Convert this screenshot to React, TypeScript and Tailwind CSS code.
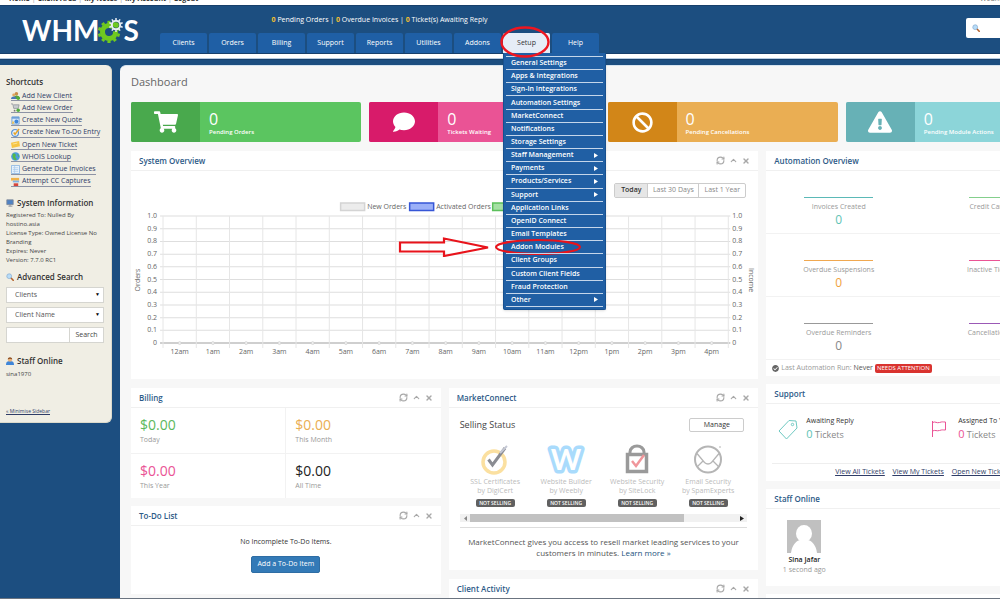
// WHMCS admin dashboard with the Setup menu open.

import type { ReactNode } from 'react';
import { FaBan, FaCheckCircle, FaComment, FaExclamationTriangle, FaShoppingCart } from 'react-icons/fa';
import { ChevronUp, RefreshCw, X } from 'lucide-react';
import clsx from 'clsx';

const topLinks = ['Home', 'Client Area', 'My Notes', 'My Account', 'Logout'];

const navItems = ['Clients', 'Orders', 'Billing', 'Support', 'Reports', 'Utilities', 'Addons', 'Setup', 'Help'];

const setupMenu = [
  { label: 'General Settings' },
  { label: 'Apps & Integrations' },
  { label: 'Sign-In Integrations' },
  { label: 'Automation Settings' },
  { label: 'MarketConnect' },
  { label: 'Notifications' },
  { label: 'Storage Settings' },
  { label: 'Staff Management', sub: true },
  { label: 'Payments', sub: true },
  { label: 'Products/Services', sub: true },
  { label: 'Support', sub: true },
  { label: 'Application Links' },
  { label: 'OpenID Connect' },
  { label: 'Email Templates' },
  { label: 'Addon Modules' },
  { label: 'Client Groups' },
  { label: 'Custom Client Fields' },
  { label: 'Fraud Protection' },
  { label: 'Other', sub: true },
];

const stats = [
  { label: 'Pending Orders', icon: <FaShoppingCart size={24} />, dark: 'bg-[#49a94d]', light: 'bg-[#5bc560]' },
  { label: 'Tickets Waiting', icon: <FaComment size={22} />, dark: 'bg-[#d81b6a]', light: 'bg-[#ea5395]' },
  { label: 'Pending Cancellations', icon: <FaBan size={21} />, dark: 'bg-[#d28618]', light: 'bg-[#eaae53]' },
  { label: 'Pending Module Actions', icon: <FaExclamationTriangle size={24} />, dark: 'bg-[#67b1b6]', light: 'bg-[#8cd5d9]' },
];

const billing = [
  { label: 'Today', color: 'text-[#5cb85c]' },
  { label: 'This Month', color: 'text-[#eaae53]' },
  { label: 'This Year', color: 'text-[#ea5395]' },
  { label: 'All Time', color: 'text-[#222222]' },
];

const automation = [
  { label: 'Invoices Created', line: 'bg-[#5bb9b7]', color: 'text-[#5ec3b5]' },
  { label: 'Credit Card Captures', line: 'bg-[#84cf8c]', color: 'text-[#8fb021]' },
  { label: 'Overdue Suspensions', line: 'bg-[#f0a850]', color: 'text-[#f0a23c]' },
  { label: 'Inactive Tickets Closed', line: 'bg-[#ea5395]', color: 'text-[#e0457f]' },
  { label: 'Overdue Reminders', line: 'bg-[#999999]', color: 'text-[#888888]' },
  { label: 'Cancellation Requests', line: 'bg-[#9b59b6]', color: 'text-[#b446b8]' },
];

const hours = [
  '12am', '1am', '2am', '3am', '4am', '5am', '6am', '7am', '8am',
  '9am', '10am', '11am', '12pm', '1pm', '2pm', '3pm', '4pm',
];

/* ---------- small drawings ---------- */

function Gears() {
  const teeth = [0, 36, 72, 108, 144, 180, 216, 252, 288, 324];
  return (
    <svg viewBox="0 0 26 26" className="-mx-px h-[26px] w-[26px]" aria-hidden="true">
      <g stroke="#6fc91f" fill="none">
        <circle cx="11" cy="15" r="6.500" strokeWidth="5" strokeDasharray="35 6" transform="rotate(-8 11 15)" />
        {teeth.map((a) => (
          <path key={a} d="M11 6.500V3.800" strokeWidth="3.200" transform={`rotate(${a} 11 15)`} />
        ))}
      </g>
      <g stroke="#e9eef3" fill="none">
        <circle cx="18" cy="8" r="4.200" strokeWidth="2" />
        {teeth.map((a) => (
          <path key={a} d="M18 3.200V1" strokeWidth="1.500" transform={`rotate(${a} 18 8)`} />
        ))}
      </g>
      <circle cx="18" cy="8" r="2.800" fill="#6fc91f" />
    </svg>
  );
}

function Magnifier() {
  return (
    <svg viewBox="0 0 10 10" className="h-2 w-2 shrink-0" aria-hidden="true">
      <path d="M6 6l3 3" stroke="#b5622c" strokeWidth="2" strokeLinecap="round" />
      <circle cx="4" cy="4" r="3" fill="#b7dcf8" stroke="#8fb3d4" />
    </svg>
  );
}

function Monitor() {
  return (
    <svg viewBox="0 0 10 10" className="h-2 w-2 shrink-0" aria-hidden="true">
      <path d="M1 1h8v6H1z" fill="#4f82c4" stroke="#7d8796" />
      <path d="M3 9h5M5 7v2" stroke="#7d8796" />
    </svg>
  );
}

function Person() {
  return (
    <svg viewBox="0 0 10 10" className="h-2 w-2 shrink-0" aria-hidden="true">
      <path d="M0 10c0-4 2-5 5-5s5 1 5 5z" fill="#3f86d8" />
      <circle cx="5" cy="3.400" r="2.600" fill="#e8b27c" />
      <path d="M2.200 3.200C2.200 1 4 .2 5 .2S7.800 1 7.800 3.200C6 2 4 2 2.200 3.200z" fill="#8a4b1e" />
    </svg>
  );
}

const shortcuts: { label: string; art: ReactNode }[] = [
  {
    label: 'Add New Client',
    art: (
      <>
        <circle cx="6" cy="3" r="2" fill="#c98d4a" />
        <path d="M3 9c0-3 1-4 3-4s4 1 4 4z" fill="#5b9e3e" />
        <circle cx="3" cy="4.500" r="1.600" fill="#e0a860" />
        <path d="M0 9c0-2 1-3 3-3s3 1 3 3z" fill="#4878b8" />
        <circle cx="8" cy="8" r="2" fill="#4fae3c" />
      </>
    ),
  },
  {
    label: 'Add New Order',
    art: (
      <>
        <path d="M0 1h2l1 5h5l1-4H3" fill="#c9ccd0" stroke="#8c9095" strokeWidth=".8" />
        <circle cx="4" cy="8.500" r="1" fill="#777" />
        <circle cx="8" cy="8" r="2" fill="#4fae3c" />
      </>
    ),
  },
  {
    label: 'Create New Quote',
    art: (
      <>
        <path d="M1 1h8v8H1z" fill="#dbeafa" stroke="#6d9fd8" />
        <path d="M1 1h8v2H1z" fill="#6d9fd8" />
        <circle cx="6" cy="6" r="2.200" fill="#3f86d8" />
        <path d="M1 9l1-4 2 3z" fill="#f0c14a" />
      </>
    ),
  },
  {
    label: 'Create New To-Do Entry',
    art: (
      <>
        <circle cx="4.500" cy="5.500" r="3.800" fill="#e4effb" stroke="#5b93d6" strokeWidth="1.300" />
        <path d="M3 5l1.500 2L9 1" stroke="#e9a425" strokeWidth="1.600" fill="none" />
      </>
    ),
  },
  {
    label: 'Open New Ticket',
    art: (
      <>
        <path d="M0 3l9-2 1 6-9 2z" fill="#f6c544" />
        <path d="M2 4.500l5-1" stroke="#fbe49a" />
      </>
    ),
  },
  {
    label: 'WHOIS Lookup',
    art: (
      <>
        <circle cx="5" cy="5" r="4.800" fill="#4b9be0" />
        <path d="M2 2c3-1 4 1 3 3s2 1 1 4C3 9 1 7 2 2z" fill="#54b848" />
        <path d="M7 2c2 1 2 3 1 4z" fill="#54b848" />
      </>
    ),
  },
  {
    label: 'Generate Due Invoices',
    art: (
      <>
        <path d="M.5.5h9v9h-9z" fill="#e8f2fc" stroke="#90b8e2" />
        <path d="M2 3h6M2 5h6M2 7h6M4 1v8" stroke="#a9c8ea" strokeWidth=".8" />
      </>
    ),
  },
  {
    label: 'Attempt CC Captures',
    art: (
      <>
        <path d="M0 1h9v3H0z" fill="#f1b24a" />
        <path d="M2 4h7v2H2z" fill="#7fb2e5" />
        <path d="M3 7h5v3H3z" fill="#d5453c" />
      </>
    ),
  },
];

/* ---------- shared pieces ---------- */

function Panel({
  title,
  tools = false,
  className,
  children,
}: {
  title: string;
  tools?: boolean;
  className?: string;
  children?: ReactNode;
}) {
  return (
    <section className={clsx('flex flex-col bg-white', className)}>
      <header className="flex h-5 shrink-0 items-center justify-between border-b border-[#f0f0f0] px-2">
        <h2 className="text-[8px] font-semibold text-[#2d5a87]">{title}</h2>
        {tools && (
          <div className="flex items-center gap-1 text-[#a8a8a8]">
            <button type="button" aria-label="Refresh"><RefreshCw size={9} strokeWidth={3} /></button>
            <button type="button" aria-label="Collapse"><ChevronUp size={9} strokeWidth={3} /></button>
            <button type="button" aria-label="Close"><X size={8} strokeWidth={4} /></button>
          </div>
        )}
      </header>
      {children}
    </section>
  );
}

function SideHeading({ icon, children }: { icon?: ReactNode; children: ReactNode }) {
  return (
    <h3 className="flex items-center gap-[3px] text-[8px] leading-3 font-semibold text-[#333]">
      {icon}
      {children}
    </h3>
  );
}

function SideSelect({ label, value }: { label: string; value: string }) {
  return (
    <div className="relative mt-1">
      <select
        aria-label={label}
        className="block h-4 w-full appearance-none border border-[#d5d5d0] bg-white pl-2 text-[7px] text-[#555]"
      >
        <option>{value}</option>
      </select>
      <span className="pointer-events-none absolute top-1 right-1 text-[5px] leading-[7px] text-black">▼</span>
    </div>
  );
}

/* ---------- page areas ---------- */

function SetupMenu() {
  return (
    <div className="absolute top-5 left-0 z-20 w-[103px] rounded-b-xs border border-t-0 border-[#17508f] bg-[#205fa4] px-[2px] pt-[3px] pb-[2px] shadow">
      <ul className="grid h-[251px] auto-rows-fr border-b border-[#c4d6ea]">
        {setupMenu.map(({ label, sub }) => (
          <li key={label} className="relative flex items-center border-t border-[#c4d6ea]">
            <a href="#" className="flex flex-1 items-center justify-between pr-[5px] pl-[5px] text-[7px] leading-[10px] font-semibold whitespace-nowrap text-white">
              {label}
              {sub && (
                <svg viewBox="0 0 4 5" className="h-[5px] w-1" aria-hidden="true">
                  <path d="M0 0l4 2.500L0 5z" fill="#fff" />
                </svg>
              )}
            </a>
            {label === 'Addon Modules' && (
              <svg viewBox="0 0 184 20" className="pointer-events-none absolute top-[-4px] right-[21px] h-5 w-[184px]" fill="none" stroke="#e8131b" strokeWidth="2.200">
                <path d="M2 5.500H46V1.500L90 10.500 46 19V14.500H2z" />
                <ellipse cx="140" cy="10" rx="42" ry="7" />
              </svg>
            )}
          </li>
        ))}
      </ul>
    </div>
  );
}

function Header() {
  return (
    <header>
      <div className="flex h-[5px] items-end overflow-hidden bg-white text-[7px] leading-3 font-bold text-[#333]">
        <nav className="flex pl-[9px]">
          {topLinks.map((text, i) => (
            <span key={text} className="flex">
              {i > 0 && <span className="px-[2px] font-normal text-[#999]">|</span>}
              <a href="#">{text}</a>
            </span>
          ))}
        </nav>
        <span className="ml-auto w-[105px] font-normal text-[#777]">Wednesday</span>
      </div>

      <div className="flex h-[49px] border-y border-[#173f6b] bg-[#1c4e80]">
        <a href="#" aria-label="WHMCS" className="flex w-[160px] items-center pl-[22px] font-[Lato,sans-serif] text-[28px] leading-8 font-bold text-white">
          WHM
          <Gears />
          S
        </a>

        <div className="flex flex-col items-center justify-between">
          <p className="pt-[9px] text-[7px] leading-[10px] text-white">
            <a href="#"><b className="text-[#f7c12d]">0</b> Pending Orders</a> |{' '}
            <a href="#"><b className="text-[#f7c12d]">0</b> Overdue Invoices</a> |{' '}
            <a href="#"><b className="text-[#f7c12d]">0</b> Ticket(s) Awaiting Reply</a>
          </p>
          <nav>
            <ul className="flex gap-[2px]">
              {navItems.map((item) => (
                <li key={item} className="relative">
                  <a
                    href="#"
                    className={clsx(
                      'flex h-5 w-[47px] items-center justify-center rounded-t-xs text-[7px] font-medium',
                      item === 'Setup' ? 'bg-[#e6edf7] text-[#333]' : 'bg-[#1f5fa5] text-white'
                    )}
                  >
                    {item}
                  </a>
                  {item === 'Setup' && (
                    <>
                      <SetupMenu />
                      <svg viewBox="0 0 52 32" className="pointer-events-none absolute -top-[7px] -left-[3px] z-30 h-8 w-[52px]" fill="none" stroke="#ee1620" strokeWidth="2.400">
                        <ellipse cx="25" cy="16" rx="23.500" ry="14.500" />
                      </svg>
                    </>
                  )}
                </li>
              ))}
            </ul>
          </nav>
        </div>

        <label className="mt-3 mr-[9px] ml-auto flex h-5 w-[110px] items-center rounded-xs bg-white pl-[6px]">
          <Magnifier />
          <input type="text" aria-label="Search" className="w-20 text-[8px] outline-none" />
        </label>
      </div>
      <div className="h-[5px] border-b border-[#b5cbe2] bg-white" />
    </header>
  );
}

function Sidebar() {
  return (
    <aside className="h-[358px] w-28 shrink-0 rounded-r-md border-r border-b border-[#dcdacb] bg-[#f0eee4] px-[6px] pt-[11px] text-[#444]">
      <SideHeading>Shortcuts</SideHeading>
      <ul className="mt-[2px] grid h-[98px] auto-rows-fr pl-[5px]">
        {shortcuts.map(({ label, art }) => (
          <li key={label} className="flex items-center">
            <a href="#" className="flex items-center gap-[2px] border-b border-[#8d93a5] text-[7px] leading-[8px] whitespace-nowrap text-[#2f3c66]">
              <svg viewBox="0 0 10 10" className="h-[9px] w-[9px] shrink-0" aria-hidden="true">{art}</svg>
              {label}
            </a>
          </li>
        ))}
      </ul>

      <div className="mt-[9px]">
        <SideHeading icon={<Monitor />}>System Information</SideHeading>
        <p className="mt-[2px] text-[6px] leading-[9px]">
          Registered To: Nulled By<br />
          hostino.asia<br />
          License Type: Owned License No<br />
          Branding<br />
          Expires: Never<br />
          Version: 7.7.0 RC1
        </p>
      </div>

      <div className="mt-[6px]">
        <SideHeading icon={<Magnifier />}>Advanced Search</SideHeading>
        <div className="pr-px">
          <SideSelect label="Search type" value="Clients" />
          <SideSelect label="Search field" value="Client Name" />
          <div className="mt-1 flex h-4">
            <input aria-label="Search text" type="text" className="w-0 flex-1 border border-[#d5d5d0] bg-white text-[7px]" />
            <button type="button" className="w-[34px] border border-l-0 border-[#d5d5d0] bg-white text-[7px]">Search</button>
          </div>
        </div>
      </div>

      <div className="mt-3">
        <SideHeading icon={<Person />}>Staff Online</SideHeading>
        <p className="mt-[3px] text-[6px] leading-[9px]">sina1970</p>
      </div>
      <a href="#" className="mt-7 block text-[5px] leading-[9px] text-[#2f3c66] underline">« Minimise Sidebar</a>
    </aside>
  );
}

function OverviewChart() {
  const left = 32;
  const right = 597;
  const top = 16;
  const bottom = 143;
  const col = (right - left) / hours.length;
  const row = (bottom - top) / 10;
  const ticks = ['1.0', '0.9', '0.8', '0.7', '0.6', '0.5', '0.4', '0.3', '0.2', '0.1', '0'];
  return (
    <svg viewBox="0 0 627 165" className="block w-full" fill="#666" fontSize="7" role="img" aria-label="Orders and income today">
      <g strokeWidth="1.500">
        <path d="M209.500 3h24v7.500h-24z" fill="#ececec" stroke="#d4d4d4" />
        <path d="M278.500 3h24v7.500h-24z" fill="#9bb0f8" stroke="#3656d6" />
        <path d="M361.500 3h24v7.500h-24z" fill="#a5e0a5" stroke="#5bc05b" />
      </g>
      <text x="236" y="9">New Orders</text>
      <text x="305" y="9">Activated Orders</text>

      {ticks.map((t, i) => (
        <g key={t}>
          <path d={`M${left - 3} ${top + i * row}H${right + 2}`} stroke={i === 10 ? '#a0a0a0' : '#dedede'} />
          <text x={left - 6} y={top + i * row + 2} textAnchor="end">{t}</text>
          <text x={right + 4} y={top + i * row + 2}>{t}</text>
        </g>
      ))}
      {[...hours, ''].map((h, i) => (
        <g key={h}>
          <path d={`M${left + i * col} ${top}V${bottom + 5}`} stroke="#e6e6e6" />
          {h && (
            <>
              <circle cx={left + (i + 0.5) * col} cy={bottom} r="1.500" fill="#eeeeee" stroke="#c4c4c4" strokeWidth=".5" />
              <text x={left + (i + 0.5) * col} y={bottom + 11} textAnchor="middle">{h}</text>
            </>
          )}
        </g>
      ))}
      <text transform="translate(8.500 80) rotate(-90)" textAnchor="middle">Orders</text>
      <text transform="translate(618 80) rotate(90)" textAnchor="middle">Income</text>
    </svg>
  );
}

function SystemOverview() {
  return (
    <Panel title="System Overview" tools className="h-[228px]">
      <div className="mt-3 mr-3 flex h-[15px] self-end rounded-xs border border-[#ccc] text-[7px] text-[#888]">
        <button type="button" className="w-8 bg-[#e6e6e6] font-semibold text-[#333]">Today</button>
        <button type="button" className="w-[52px] border-x border-[#ccc]">Last 30 Days</button>
        <button type="button" className="w-[46px]">Last 1 Year</button>
      </div>
      <div className="mt-[2px]">
        <OverviewChart />
      </div>
    </Panel>
  );
}

function Billing() {
  return (
    <Panel title="Billing" tools className="h-[110px]">
      <div className="grid flex-1 grid-cols-2 grid-rows-2 gap-px bg-[#f2f2f2]">
        {billing.map(({ label, color }) => (
          <div key={label} className="bg-white pt-[9px] pl-[9px]">
            <p className={clsx('text-[14px] leading-4', color)}>$0.00</p>
            <p className="mt-[2px] text-[7px] leading-[10px] text-[#999]">{label}</p>
          </div>
        ))}
      </div>
    </Panel>
  );
}

function TodoList() {
  return (
    <Panel title="To-Do List" tools className="h-[88px] items-stretch">
      <div className="flex flex-col items-center pt-[11px]">
        <p className="text-[7px] leading-[10px] text-[#333]">No Incomplete To-Do Items.</p>
        <button type="button" className="mt-[9px] h-[17px] w-[69px] rounded-xs border border-[#2e6da4] bg-[#337ab7] text-[7px] font-medium text-white">
          Add a To-Do Item
        </button>
      </div>
    </Panel>
  );
}

const products = [
  {
    name: 'SSL Certificates',
    vendor: 'by DigiCert',
    art: (
      <>
        <circle cx="17" cy="18" r="11" fill="none" stroke="#fbe0a0" strokeWidth="3.500" />
        <path d="M11.500 15.500l4 5.500L28 4" fill="none" stroke="#8a8c92" strokeWidth="3" />
        <path d="M23 9l7-7" stroke="#c4c8d4" strokeWidth="2" />
      </>
    ),
  },
  {
    name: 'Website Builder',
    vendor: 'by Weebly',
    art: (
      <text x="18" y="26" textAnchor="middle" fontFamily="Lato, sans-serif" fontSize="29" fontWeight="700" fill="#fff" stroke="#a9dbfc" strokeWidth="7" strokeLinejoin="round" paintOrder="stroke">
        W
      </text>
    ),
  },
  {
    name: 'Website Security',
    vendor: 'by SiteLock',
    art: (
      <>
        <path d="M11 10V8a7 6 0 0 1 14 0v2" fill="none" stroke="#9a9a9a" strokeWidth="3" />
        <path d="M8.500 10.500h19v17h-19z" fill="#fff" stroke="#9a9a9a" strokeWidth="3.500" />
        <path d="M13 17l4 5 8-11" fill="none" stroke="#f0969b" strokeWidth="2.500" />
      </>
    ),
  },
  {
    name: 'Email Security',
    vendor: 'by SpamExperts',
    art: (
      <g fill="none" stroke="#b5b5b5">
        <circle cx="18" cy="15.500" r="13" strokeWidth="2" />
        <path d="M7 9.500l7.500 9q3.500 3 7 0l7.500-9M7 23l6-6M29 23l-6-6" strokeWidth="1.300" />
        <path d="M29 3h2" />
      </g>
    ),
  },
];

function MarketConnect() {
  return (
    <Panel title="MarketConnect" tools className="h-[182px]">
      <div className="px-[11px] pt-[10px]">
        <div className="flex items-center justify-between">
          <h3 className="text-[9px] leading-3 text-[#444]">Selling Status</h3>
          <button type="button" className="mr-[3px] h-[14px] w-[55px] rounded-xs border border-[#ccc] bg-white text-[7px] text-[#333]">Manage</button>
        </div>
        <ul className="mt-3 flex">
          {products.map(({ name, vendor, art }) => (
            <li key={name} className="flex w-[71px] shrink-0 flex-col items-center text-[7px] leading-[9px] whitespace-nowrap text-[#bbb]">
              <svg viewBox="0 0 36 32" className="mb-px h-8 w-9 overflow-visible" aria-hidden="true">{art}</svg>
              <span>{name}</span>
              <span>{vendor}</span>
              <span className="mt-1 h-2 w-[39px] rounded-xs bg-[#606060] text-center text-[5px] leading-[8px] font-semibold text-white">NOT SELLING</span>
            </li>
          ))}
        </ul>
        <div className="mt-[7px] flex h-2 items-center justify-between bg-[#f1f1f1] px-[3px]">
          <svg viewBox="0 0 4 5" className="h-[5px] w-1"><path d="M4 0L1 2.500 4 5z" fill="#888" /></svg>
          <span className="mx-[3px] flex h-2 flex-1"><span className="w-4/5 bg-[#c1c1c1]" /></span>
          <svg viewBox="0 0 4 5" className="h-[5px] w-1"><path d="M0 0l4 2.500L0 5z" fill="#222" /></svg>
        </div>
        <p className="mt-[5px] border-t border-[#ddd] pt-2 text-center text-[8px] leading-[11px] text-[#555]">
          MarketConnect gives you access to resell market leading services to your customers in minutes.{' '}
          <a href="#" className="text-[#23527c]">Learn more »</a>
        </p>
      </div>
    </Panel>
  );
}

function AutomationOverview() {
  return (
    <Panel title="Automation Overview" className="h-[225px]">
      <div className="grid grid-cols-2">
        {[0, 1, 2].map((r) => (
          <div key={r} className="col-span-2 grid h-[63px] grid-cols-2 gap-x-5 border-b border-[#f2f2f2]">
            {automation.slice(r * 2, r * 2 + 2).map(({ label, line, color }) => (
              <div key={label} className="flex flex-col items-center pt-[26px] whitespace-nowrap">
                <span className={clsx('h-px w-[69px]', line)} />
                <span className="mt-1 text-[7px] leading-[10px] text-[#999]">{label}</span>
                <span className={clsx('mt-px text-[12px] leading-[14px]', color)}>0</span>
              </div>
            ))}
          </div>
        ))}
      </div>
      <p className="flex flex-1 items-center gap-[2px] pl-[6px] text-[7px] text-[#999]">
        <FaCheckCircle size={7} className="text-[#666]" />
        <span>Last Automation Run: <span className="text-[#555]">Never</span></span>
        <span className="rounded-xs bg-[#d9332f] px-[2px] text-[6px] leading-[9px] font-medium text-white">NEEDS ATTENTION</span>
      </p>
    </Panel>
  );
}

function Support() {
  return (
    <Panel title="Support" className="h-[97px]">
      <div className="grid h-[59px] grid-cols-2 pt-[11px] whitespace-nowrap">
        <div className="flex gap-2 pl-3">
          <svg viewBox="0 0 20 22" className="mt-1 h-[22px] w-5" fill="none" stroke="#6fc9c2">
            <path d="M1 12L11 1.500l7 .5 1 7L8.500 20z" />
            <circle cx="14.500" cy="5.500" r="1.200" />
          </svg>
          <div>
            <p className="text-[7px] leading-[11px] text-[#333]">Awaiting Reply</p>
            <p className="text-[9px] leading-4 text-[#888]"><span className="text-[11px] text-[#5ec3b5]">0</span> Tickets</p>
          </div>
        </div>
        <div className="flex gap-2 pl-[11px]">
          <svg viewBox="0 0 16 20" className="mt-1 h-5 w-4" fill="none" stroke="#ea5395">
            <path d="M.500 2v16M.500 3.500c3-1.500 4 1 7 0s3-.500 6-.500v8c-3 0-3-.500-6 .500s-4-1-7 .500" />
          </svg>
          <div className="pl-[2px]">
            <p className="text-[7px] leading-[11px] text-[#333]">Assigned To You</p>
            <p className="text-[9px] leading-4 text-[#888]"><span className="text-[11px] text-[#ea5395]">0</span> Tickets</p>
          </div>
        </div>
      </div>
      <div className="mx-[6px] flex flex-1 items-center justify-center gap-2 border-t border-[#eee] text-[7px] text-[#2f3c66] underline">
        <a href="#">View All Tickets</a>
        <a href="#">View My Tickets</a>
        <a href="#">Open New Ticket</a>
      </div>
    </Panel>
  );
}

function StaffOnline() {
  return (
    <Panel title="Staff Online" className="h-[97px]">
      <div className="flex w-[76px] flex-col items-center pt-[11px]">
        <svg viewBox="0 0 34 33" className="h-[33px] w-[34px] bg-[#c0c0c0]" fill="#fff" role="img" aria-label="Sina Jafar">
          <ellipse cx="17" cy="13.500" rx="8" ry="8.500" />
          <path d="M4 33c1-8 5-12 9-13h8c4 1 8 5 9 13z" />
        </svg>
        <p className="mt-px text-[7px] leading-[11px] font-semibold text-[#222]">Sina Jafar</p>
        <p className="text-[7px] leading-[10px] text-[#999]">1 second ago</p>
      </div>
    </Panel>
  );
}

export default function App() {
  return (
    <div className="h-screen overflow-hidden border-b border-[#6b7480] bg-[#1c4e80] font-['Open_Sans',sans-serif]">
      {/* the admin theme keeps a minimum width and lets narrow windows clip it */}
      <div className="flex min-h-full min-w-[1085px] flex-col">
        <Header />
        <div className="flex flex-1 items-start gap-2 border-t border-[#173f6b] pt-[5px]">
          <Sidebar />
          <main className="flex-1 rounded-tl-md border-t border-[#d6e4f0] bg-[#f7f7f7] pt-2 pr-[9px] pb-2 pl-[11px]">
            <h1 className="text-[11px] leading-4 text-[#666]">Dashboard</h1>

            <div className="mt-3 grid grid-cols-4 gap-2">
              {stats.map(({ label, icon, dark, light }) => (
                <a key={label} href="#" className={clsx('flex h-10 overflow-hidden rounded-xs text-white', light)}>
                  <span className={clsx('flex w-[69px] items-center justify-center', dark)}>{icon}</span>
                  <span className="pt-[9px] pl-[9px]">
                    <span className="block text-[16px] leading-4">0</span>
                    <span className="block text-[6px] leading-[10px] font-semibold">{label}</span>
                  </span>
                </a>
              ))}
            </div>

            <div className="mt-[9px] grid grid-cols-3 gap-2">
              <div className="col-span-2 flex flex-col gap-[9px]">
                <SystemOverview />
                <div className="grid grid-cols-2 gap-2">
                  <div className="flex flex-col gap-2">
                    <Billing />
                    <TodoList />
                  </div>
                  <div className="flex flex-col gap-[9px]">
                    <MarketConnect />
                    <Panel title="Client Activity" tools className="h-24" />
                  </div>
                </div>
              </div>
              <div className="flex flex-col gap-2">
                <AutomationOverview />
                <Support />
                <StaffOnline />
                <section className="h-24 bg-white" />
              </div>
            </div>
          </main>
        </div>
      </div>
    </div>
  );
}
